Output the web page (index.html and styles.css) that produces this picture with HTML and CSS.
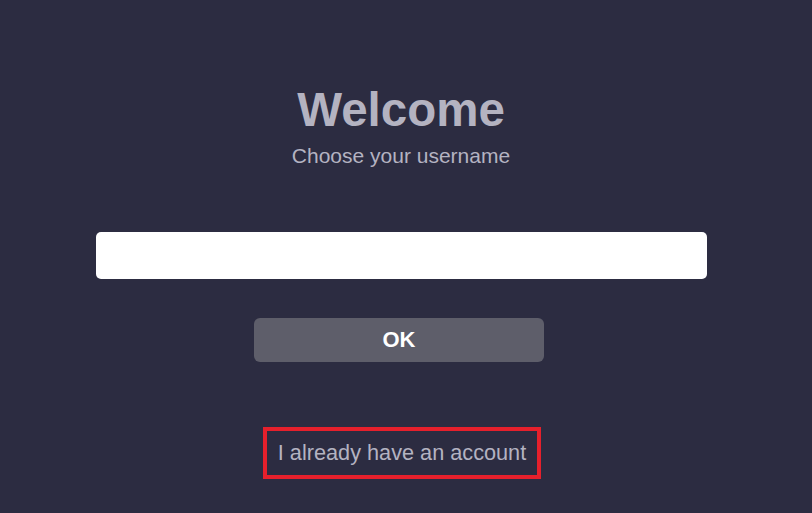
FILE: index.html
```html
<!DOCTYPE html>
<html lang="en">
<head>
    <meta charset="UTF-8">
    <meta name="viewport" content="width=device-width, initial-scale=1.0">
    <title>Welcome</title>
    <link rel="stylesheet" href="styles.css">
</head>
<body>
    <div class="login">
      <h1 class="title">Welcome</h1>
      <p class="subtitle">Choose your username</p>
      <input type="text" class="username" name="username" id="username">
      <button type="button" class="ok-button">OK</button>
      <a href="#" class="account-link">I already have an account</a>
    </div>
</body>
</html>
```

FILE: styles.css
```css
body {
  /* fondo oscuro azulado */
  background-color: #2c2c41;
  margin: 0;
  height: 100vh;
  font-family: 'Liberation Sans', Arial, sans-serif;
}

.login {
  display: flex;
  flex-direction: column;
  align-items: center;
  padding-right: 10px;
}

.title {
  margin: 83px 0 0;
  font-size: 47.5px;
  line-height: 54px;
  font-weight: bold;
  color: #b4b3c1;
}

.subtitle {
  margin: 7px 0 0;
  font-size: 21px;
  line-height: 24px;
  color: #b4b3c1;
}

/* ------INPUT------- */
.username {
  margin-top: 64px;
  width: 611px;
  height: 47px;
  border: none;
  border-radius: 5px;
  background-color: #ffffff;
  box-sizing: border-box;
  outline: none;
}

/* ------BOTON------- */
.ok-button {
  margin-top: 39px;
  margin-right: 4px;
  width: 290px;
  height: 44px;
  border: none;
  border-radius: 6px;
  background-color: #5e5e6a;
  color: #ffffff;
  font-family: 'Liberation Sans', Arial, sans-serif;
  font-size: 22px;
  font-weight: bold;
  cursor: pointer;
}

.account-link {
  margin-top: 65px;
  margin-left: 2px;
  width: 278px;
  height: 52px;
  border: 4px solid #e6202c;
  box-sizing: border-box;
  display: flex;
  align-items: center;
  justify-content: center;
  font-size: 21.7px;
  color: #b4b3c1;
  text-decoration: none;
}
```
